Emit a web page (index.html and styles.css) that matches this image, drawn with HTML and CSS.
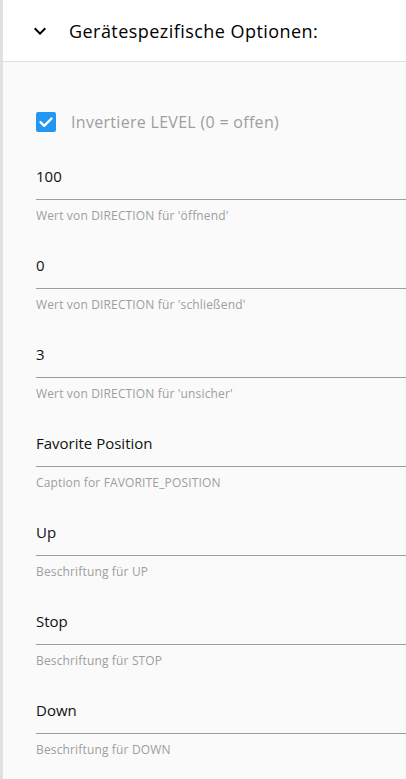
FILE: index.html
```html
<!DOCTYPE html>
<html>
<head>
<meta charset="utf-8">
<link rel="stylesheet" href="styles.css">
</head>
<body>
<div class="panel">
  <div class="header">
    <svg class="chev" width="24" height="24" viewBox="0 0 24 24"><path d="M7.41 8.59 12 13.17l4.59-4.58L18 10l-6 6-6-6z" fill="#000"/></svg>
    <span class="title">Gerätespezifische Optionen:</span>
  </div>
  <div class="body">
    <label class="check">
      <span class="box"><svg width="20" height="20" viewBox="0 0 20 20"><path d="M4.5 10.2 8.2 13.8 15.5 6.5" fill="none" stroke="#fff" stroke-width="2.4" stroke-linecap="round" stroke-linejoin="round"/></svg></span>
      <span class="check-label">Invertiere LEVEL (0 = offen)</span>
    </label>
    <div class="field"><div class="value">100</div><div class="helper">Wert von DIRECTION für 'öffnend'</div></div>
    <div class="field"><div class="value">0</div><div class="helper">Wert von DIRECTION für 'schließend'</div></div>
    <div class="field"><div class="value">3</div><div class="helper">Wert von DIRECTION für 'unsicher'</div></div>
    <div class="field"><div class="value">Favorite Position</div><div class="helper">Caption for FAVORITE_POSITION</div></div>
    <div class="field"><div class="value">Up</div><div class="helper">Beschriftung für UP</div></div>
    <div class="field"><div class="value">Stop</div><div class="helper">Beschriftung für STOP</div></div>
    <div class="field"><div class="value">Down</div><div class="helper">Beschriftung für DOWN</div></div>
  </div>
</div>
</body>
</html>
```
FILE: styles.css
```css
html, body { margin: 0; padding: 0; }
body {
  font-family: "Open Sans", "Noto Sans", sans-serif;
  background: #fafafa;
  width: 406px;
  height: 779px;
  overflow: hidden;
}
.panel {
  border-left: 3px solid #e0e0e0;
  min-height: 779px;
  box-sizing: border-box;
  background: #fafafa;
}
.header {
  height: 61px;
  background: #fff;
  border-bottom: 1px solid #e0e0e0;
  display: flex;
  align-items: center;
  padding-left: 25px;
}
.chev { flex: none; }
.title {
  margin-left: 17px;
  font-size: 18px;
  color: #000;
  letter-spacing: 0.45px;
}
.body {
  padding: 48px 0 0 33px;
}
.check {
  display: flex;
  align-items: center;
  height: 24px;
}
.box {
  width: 20px;
  height: 20px;
  background: #2196f3;
  border-radius: 2px;
  display: flex;
  align-items: center;
  justify-content: center;
}
.check-label {
  margin-left: 15px;
  font-size: 16px;
  letter-spacing: 0.3px;
  color: #9e9e9e;
}
.field {
  margin-top: 30px;
}
.check + .field { margin-top: 31px; }
.value {
  font-size: 15px;
  color: #111;
  height: 34px;
  line-height: 22px;
  border-bottom: 1px solid #9e9e9e;
}
.helper {
  font-size: 12px;
  letter-spacing: 0.15px;
  color: #9e9e9e;
  margin-top: 8px;
  line-height: 16px;
}
```
